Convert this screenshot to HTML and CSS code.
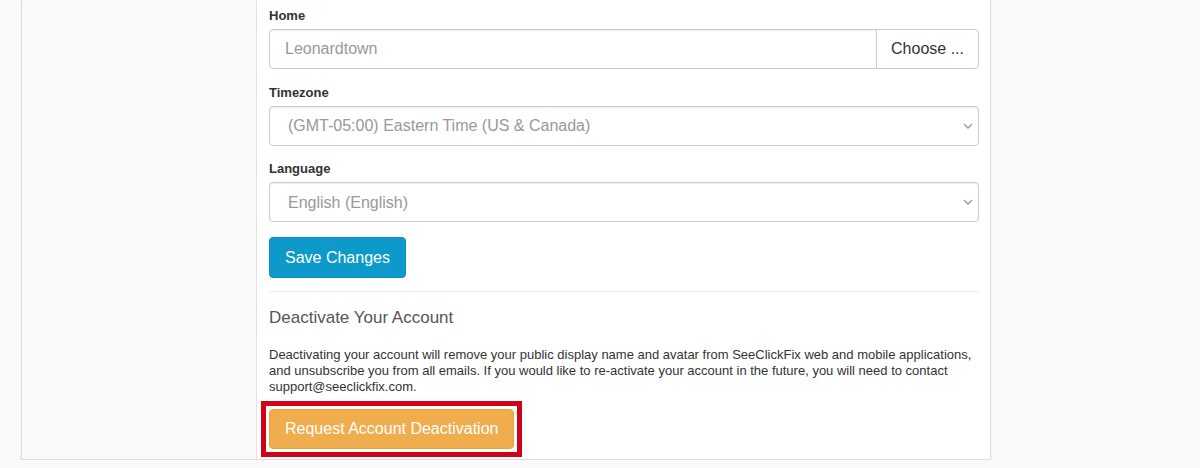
FILE: index.html
```html
<!DOCTYPE html>
<html>
  <head>
    <meta charset="UTF-8">
    <meta name=viewport content="width=device-width, initial-scale=1">
    <link rel="stylesheet" href="styles.css">
  </head>
  <body>
    <div id="account">
      <div id="sidebar"></div>

      <div id="settings">
        <div class="form-group">
          <label for="home">Home</label>
          <div class="input-group">
            <input id="home" type="text" value="Leonardtown" readonly>
            <button class="btn btn-default">Choose ...</button>
          </div>
        </div>

        <div class="form-group">
          <label for="timezone">Timezone</label>
          <div class="select-wrap">
            <select id="timezone">
              <option>(GMT-05:00) Eastern Time (US &amp; Canada)</option>
            </select>
            <svg class="caret" width="10" height="6" viewBox="0 0 10 6"><path d="M1 1l4 4 4-4" fill="none" stroke="#999" stroke-width="1.3"/></svg>
          </div>
        </div>

        <div class="form-group">
          <label for="language">Language</label>
          <div class="select-wrap">
            <select id="language">
              <option>English (English)</option>
            </select>
            <svg class="caret" width="10" height="6" viewBox="0 0 10 6"><path d="M1 1l4 4 4-4" fill="none" stroke="#999" stroke-width="1.3"/></svg>
          </div>
        </div>

        <button class="btn btn-primary">Save Changes</button>

        <hr>

        <h4>Deactivate Your Account</h4>
        <p>Deactivating your account will remove your public display name and avatar from SeeClickFix web and mobile applications, and unsubscribe you from all emails. If you would like to re-activate your account in the future, you will need to contact support@seeclickfix.com.</p>

        <div class="highlight">
          <button class="btn btn-warning">Request Account Deactivation</button>
        </div>
      </div>
    </div>
  </body>
</html>
```

FILE: styles.css
```css
body {
  background-color: #fafafa;
  color: #333;
  font-family: "Liberation Sans", Arial, sans-serif;
  margin: 0;
}

#account {
  display: flex;
  width: 970px;
  margin-left: 21px;
  box-sizing: border-box;
  border: 1px solid #ddd;
  border-top: none;
  background-color: #fff;
  box-shadow: 0 2px 2px rgba(0, 0, 0, 0.08);
}

#sidebar {
  flex-shrink: 0;
  width: 234px;
  background-color: #f9f9f9;
  border-right: 1px solid #e3e3e3;
}

#settings {
  flex-grow: 1;
  min-width: 0;
  padding: 6px 11px 2px 12px;
}

.form-group {
  margin-bottom: 13.5px;
}

.form-group label {
  display: block;
  font-size: 13px;
  font-weight: bold;
  line-height: 20px;
  margin-bottom: 3px;
}

.input-group {
  display: flex;
}

input[type=text], select {
  height: 40px;
  box-sizing: border-box;
  border: 1px solid #ccc;
  border-radius: 4px;
  background-color: #fff;
  box-shadow: inset 0 1px 1px rgba(0, 0, 0, 0.075);
  color: #999;
  font-family: inherit;
  font-size: 16px;
  outline: none;
}

input[type=text] {
  flex-grow: 1;
  min-width: 0;
  padding: 0 15px;
  border-radius: 4px 0 0 4px;
}

.select-wrap {
  position: relative;
}

select {
  width: 100%;
  padding: 0 30px 0 18px;
  -webkit-appearance: none;
  appearance: none;
}

.caret {
  position: absolute;
  right: 6px;
  top: 17px;
  pointer-events: none;
}

.btn {
  height: 40px;
  box-sizing: border-box;
  padding: 0 15px;
  border: 1px solid transparent;
  border-radius: 4px;
  font-family: inherit;
  font-size: 16px;
  cursor: pointer;
}

.btn-default {
  flex-shrink: 0;
  margin-left: -1px;
  padding: 0 14px;
  background-color: #fff;
  border-color: #ccc;
  border-radius: 0 4px 4px 0;
  color: #333;
}

.btn-primary {
  height: 41px;
  margin-top: 1.5px;
  background-color: #0d9acb;
  border-color: #0b8fbd;
  color: #fff;
}

.btn-warning {
  background-color: #f0ad4e;
  border-color: #eea236;
  color: #fff;
}

.highlight {
  display: inline-flex;
  margin-left: -8px;
  padding: 3px;
  border: 5px solid #d0021b;
}

hr {
  border: 0;
  border-top: 1px solid #eee;
  margin: 13px 0 16px;
}

h4 {
  color: #555;
  font-size: 17px;
  font-weight: normal;
  line-height: 19px;
  margin: 0 0 20px;
}

p {
  font-size: 13px;
  line-height: 16px;
  margin: 0 0 6px;
}
```
